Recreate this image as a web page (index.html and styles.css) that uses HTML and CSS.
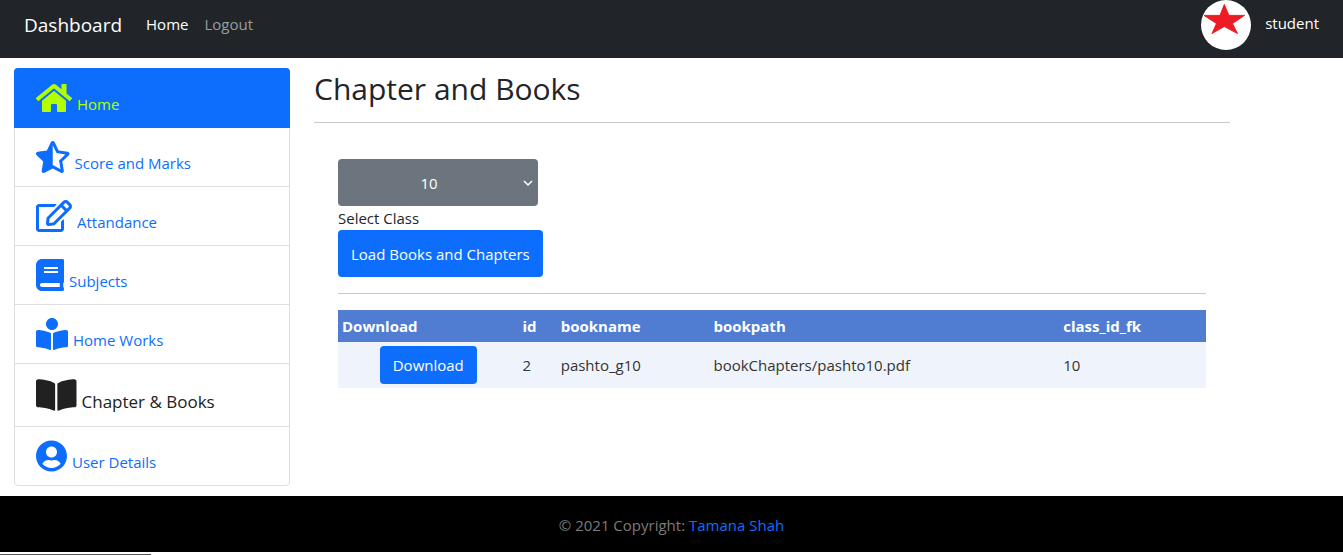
FILE: index.html
```
<!DOCTYPE html>
<html lang="en">
<head>
<meta charset="utf-8">
<title>Chapter and Books</title>
<meta name="viewport" content="width=device-width, initial-scale=1">
<link rel="stylesheet" href="styles.css">
</head>
<body>
<header class="navbar">
  <a class="brand" href="#">Dashboard</a>
  <nav class="nav-links">
    <a class="nav-link active" href="#">Home</a>
    <a class="nav-link" href="#">Logout</a>
  </nav>
  <div class="account">
    <svg class="avatar" viewBox="0 0 50 50" aria-hidden="true"><circle cx="25" cy="25" r="25" fill="#fff"/><path fill="#ed1c24" stroke="#ed1c24" stroke-linejoin="round" d="M23.300 4.500L27.900 15.400H43.500L31.400 23.500 36.500 33.500 23.300 26.500 11 33.500 15.500 23.500 3 15.400H19Z"/></svg>
    <span class="username">student</span>
  </div>
</header>

<div class="layout">
  <nav class="sidebar" aria-label="Sections">
    <a class="item current" href="#"><svg class="icon" viewBox="0 0 576 512"><path d="M280.370 148.260L96 300.110V464a16 16 0 0 0 16 16l112.060-.29a16 16 0 0 0 15.920-16V368a16 16 0 0 1 16-16h64a16 16 0 0 1 16 16v95.640a16 16 0 0 0 16 16.050L464 480a16 16 0 0 0 16-16V300L295.670 148.260a12.190 12.190 0 0 0-15.300 0zM571.600 251.470L488 182.560V44.050a12 12 0 0 0-12-12h-56a12 12 0 0 0-12 12v72.610L318.470 43a48 48 0 0 0-61 0L4.340 251.470a12 12 0 0 0-1.600 16.900l25.500 31A12 12 0 0 0 45.150 301l235.220-193.740a12.190 12.190 0 0 1 15.300 0L530.900 301a12 12 0 0 0 16.900-1.600l25.500-31a12 12 0 0 0-1.700-16.930z"/></svg><span class="label">Home</span></a>
    <a class="item" href="#"><svg class="icon" viewBox="0 0 536 512"><path d="M508.550 171.510L362.180 150.200 296.770 17.810C290.890 5.980 279.420 0 267.950 0c-11.400 0-22.790 5.900-28.690 17.810l-65.430 132.380-146.380 21.290c-26.250 3.800-36.770 36.090-17.740 54.590l105.890 103-25.060 145.480C86.980 495.330 103.570 512 122.150 512c4.930 0 10-1.170 14.870-3.750l130.950-68.680 130.940 68.700c4.860 2.550 9.920 3.710 14.830 3.710 18.600 0 35.220-16.610 31.660-37.400l-25.030-145.490 105.910-102.980c19.040-18.500 8.520-50.800-17.730-54.600zm-121.740 123.200l-18.120 17.620 4.280 24.880 19.520 113.450-102.130-53.590-22.380-11.740.03-317.190 51.030 103.290 11.180 22.630 25.010 3.640 114.230 16.630-82.650 80.380z"/></svg><span class="label">Score and Marks</span></a>
    <a class="item" href="#"><svg class="icon" viewBox="0 0 576 512"><path d="M402.300 344.900l32-32c5-5 13.700-1.500 13.700 5.700V464c0 26.500-21.500 48-48 48H48c-26.500 0-48-21.500-48-48V112c0-26.500 21.500-48 48-48h273.500c7.100 0 10.700 8.600 5.700 13.700l-32 32c-1.500 1.500-3.500 2.300-5.700 2.300H48v352h352V350.500c0-2.100.8-4.100 2.300-5.600zm156.600-201.800L296.300 405.700l-90.400 10c-26.200 2.900-48.500-19.200-45.600-45.600l10-90.400L432.900 17.100c22.900-22.900 59.900-22.900 82.700 0l43.200 43.200c22.900 22.900 22.900 60 .1 82.800zM460.100 174L402 115.900 216.200 301.800l-7.300 65.300 65.300-7.300L460.100 174zm64.800-79.700l-43.200-43.200c-4.100-4.100-10.800-4.100-14.800 0L436 82l58.100 58.100 30.900-30.900c4-4.200 4-10.800-.1-14.900z"/></svg><span class="label">Attandance</span></a>
    <a class="item" href="#"><svg class="icon" viewBox="0 0 448 512"><path d="M448 360V24c0-13.300-10.700-24-24-24H96C43 0 0 43 0 96v320c0 53 43 96 96 96h328c13.300 0 24-10.700 24-24v-16c0-7.500-3.500-14.300-8.900-18.700-4.200-15.400-4.200-59.300 0-74.700 5.400-4.300 8.900-11.100 8.900-18.600zM128 134c0-3.300 2.700-6 6-6h212c3.300 0 6 2.700 6 6v20c0 3.300-2.700 6-6 6H134c-3.300 0-6-2.700-6-6v-20zm0 64c0-3.300 2.700-6 6-6h212c3.300 0 6 2.700 6 6v20c0 3.300-2.700 6-6 6H134c-3.300 0-6-2.700-6-6v-20zm253.400 250H96c-17.700 0-32-14.300-32-32 0-17.600 14.400-32 32-32h285.400c-1.900 17.100-1.900 46.900 0 64z"/></svg><span class="label">Subjects</span></a>
    <a class="item" href="#"><svg class="icon" viewBox="0 0 512 512"><path d="M352 96c0-53.020-42.980-96-96-96s-96 42.980-96 96 42.980 96 96 96 96-42.980 96-96zM233.590 241.100c-59.330-36.320-155.430-46.300-203.790-49.050C13.550 191.130 0 203.510 0 219.140v222.800c0 14.330 11.590 26.280 26.490 27.050 43.660 2.290 131.990 10.680 193.040 41.430 9.370 4.720 20.480-1.710 20.480-11.870V252.560c-.01-4.670-2.320-8.950-6.420-11.460zm248.610-49.050c-48.350 2.740-144.460 12.730-203.780 49.050-4.100 2.510-6.410 6.960-6.410 11.630v245.790c0 10.190 11.140 16.630 20.540 11.900 61.040-30.720 149.320-39.110 192.970-41.400 14.900-.78 26.490-12.730 26.490-27.060V219.140c-.01-15.630-13.560-28.010-29.810-27.090z"/></svg><span class="label">Home Works</span></a>
    <a class="item selected" href="#"><svg class="icon" viewBox="0 0 576 512"><path d="M542.220 32.050c-54.800 3.110-163.720 14.430-230.960 55.590-4.640 2.840-7.270 7.890-7.270 13.170v363.870c0 11.550 12.630 18.850 23.280 13.490 69.180-34.820 169.230-44.320 218.700-46.920 16.890-.89 30.020-14.430 30.020-30.660V62.750c.01-17.710-15.350-31.740-33.770-30.700zM264.730 87.640C197.500 46.480 88.580 35.170 33.780 32.050 15.360 31.010 0 45.040 0 62.750V400.600c0 16.240 13.130 29.780 30.020 30.660 49.490 2.600 149.590 12.110 218.770 46.950 10.620 5.350 23.210-1.940 23.210-13.460V100.630c0-5.290-2.620-10.140-7.270-12.990z"/></svg><span class="label">Chapter &amp; Books</span></a>
    <a class="item" href="#"><svg class="icon" viewBox="0 0 496 512"><path d="M248 8C111 8 0 119 0 256s111 248 248 248 248-111 248-248S385 8 248 8zm0 96c48.600 0 88 39.400 88 88s-39.400 88-88 88-88-39.400-88-88 39.400-88 88-88zm0 344c-58.700 0-111.300-26.600-146.500-68.200 18.800-35.400 55.600-59.800 98.500-59.800 2.400 0 4.800.4 7.100 1.100 13 4.200 26.600 6.900 40.900 6.900 14.300 0 28-2.700 40.900-6.900 2.300-.7 4.700-1.100 7.100-1.100 42.900 0 79.700 24.400 98.500 59.800C359.300 421.400 306.700 448 248 448z"/></svg><span class="label">User Details</span></a>
  </nav>

  <main class="main">
    <h1 class="title">Chapter and Books</h1>
    <section class="panel">
      <form class="class-form">
        <select class="class-select" id="class-id"><option>10</option></select>
        <label class="class-label" for="class-id">Select Class</label>
        <button class="btn btn-load" type="button">Load Books and Chapters</button>
      </form>
      <table class="books">
        <colgroup><col class="col-download"><col class="col-id"><col class="col-name"><col class="col-path"><col></colgroup>
        <thead>
          <tr><th>Download</th><th>id</th><th>bookname</th><th>bookpath</th><th>class_id_fk</th></tr>
        </thead>
        <tbody>
          <tr><td class="action"><button class="btn" type="button">Download</button></td><td>2</td><td>pashto_g10</td><td>bookChapters/pashto10.pdf</td><td>10</td></tr>
        </tbody>
      </table>
    </section>
  </main>
</div>

<footer class="footer">© 2021 Copyright: <a class="footer-link" href="#">Tamana Shah</a></footer>
<div class="status-line"></div>
</body>
</html>
```
FILE: styles.css
```
* { box-sizing: border-box; }

body {
  margin: 0;
  background: #fff;
  color: #212529;
  font-family: "Open Sans", "Noto Sans", sans-serif;
  font-size: 15px;
  line-height: 24px;
}

a { text-decoration: none; }

.navbar {
  display: flex;
  align-items: center;
  padding: 0 24px 8px;
  background: #212529;
}
.brand { margin-right: 24px; color: #fff; font-size: 19px; }
.nav-links { display: flex; gap: 16px; padding-bottom: 2px; }
.nav-link { color: #9b9d9e; }
.nav-link.active { color: #fff; }
.account { display: flex; align-items: center; gap: 14px; margin-left: auto; color: #fff; }
.avatar { display: block; width: 50px; height: 50px; }
.username { padding-bottom: 4px; }

.layout { display: flex; align-items: flex-start; padding: 10px 14px; }

.sidebar {
  flex: 0 0 276px;
  border: 1px solid #dfdfdf;
  border-radius: 4px;
}
.item {
  display: flex;
  align-items: center;
  gap: 5px;
  padding: 10px 21px;
  border-bottom: 1px solid #dfdfdf;
  color: #0d6efd;
}
.item:last-child { border-bottom: 0; }
.item.current {
  margin: -1px -1px 0;
  padding: 11px 22px 10px;
  border-color: #0d6efd;
  border-radius: 4px 4px 0 0;
  background: #0d6efd;
  color: #b2ff00;
}
.item.selected { color: #212121; font-size: 17px; line-height: 26px; }
.icon { display: block; height: 32px; fill: currentColor; }
.item.selected .icon { height: 36px; }
.label { padding: 13px 0 1px; }
.item.selected .label { padding-top: 15px; }

.main { flex: 0 1 73%; min-width: 0; padding: 0 20px 0 24px; }
.title {
  margin: 0;
  padding: 2px 0 14px;
  border-bottom: 1px solid #c7c8c9;
  font-size: 30px;
  font-weight: 400;
  line-height: 38px;
}
.panel { padding: 36px 24px 0; }
.class-form {
  display: flex;
  flex-direction: column;
  align-items: flex-start;
  padding-bottom: 16px;
  border-bottom: 1px solid #c7c8c9;
}
.class-select {
  width: 200px;
  height: 47px;
  padding: 0 18px 0 0;
  border: 0;
  border-radius: 4px;
  appearance: none;
  background: #6c757d url("data:image/svg+xml,%3Csvg xmlns='http://www.w3.org/2000/svg' width='10' height='8'%3E%3Cpath d='M1 2l4 4 4-4' fill='none' stroke='white' stroke-width='1.5'/%3E%3C/svg%3E") no-repeat right 5px center;
  color: #fff;
  font: inherit;
  text-align: center;
  text-align-last: center;
}
.btn {
  height: 38px;
  padding: 0 13px;
  border: 0;
  border-radius: 4px;
  background: #0d6efd;
  color: #fff;
  font: inherit;
}
.btn-load { height: 47px; }

.books {
  width: 100%;
  margin-top: 16px;
  border-collapse: collapse;
  table-layout: fixed;
  background: #eff3fb;
  color: #333;
}
.col-download { width: 20.8%; }
.col-id { width: 4.4%; }
.col-name { width: 17.6%; }
.col-path { width: 40.3%; }
.books th, .books td { padding: 4px; text-align: left; }
.books th { background: #507cd1; color: #fff; font-weight: 700; }
.books td.action { text-align: center; }

.footer {
  padding: 17px 16px 15px;
  background: #000;
  color: #7c7c7c;
  text-align: center;
}
.footer-link { color: #0d6efd; }
.status-line { width: 151px; margin-top: 2px; border-top: 1px solid #555; }
```
